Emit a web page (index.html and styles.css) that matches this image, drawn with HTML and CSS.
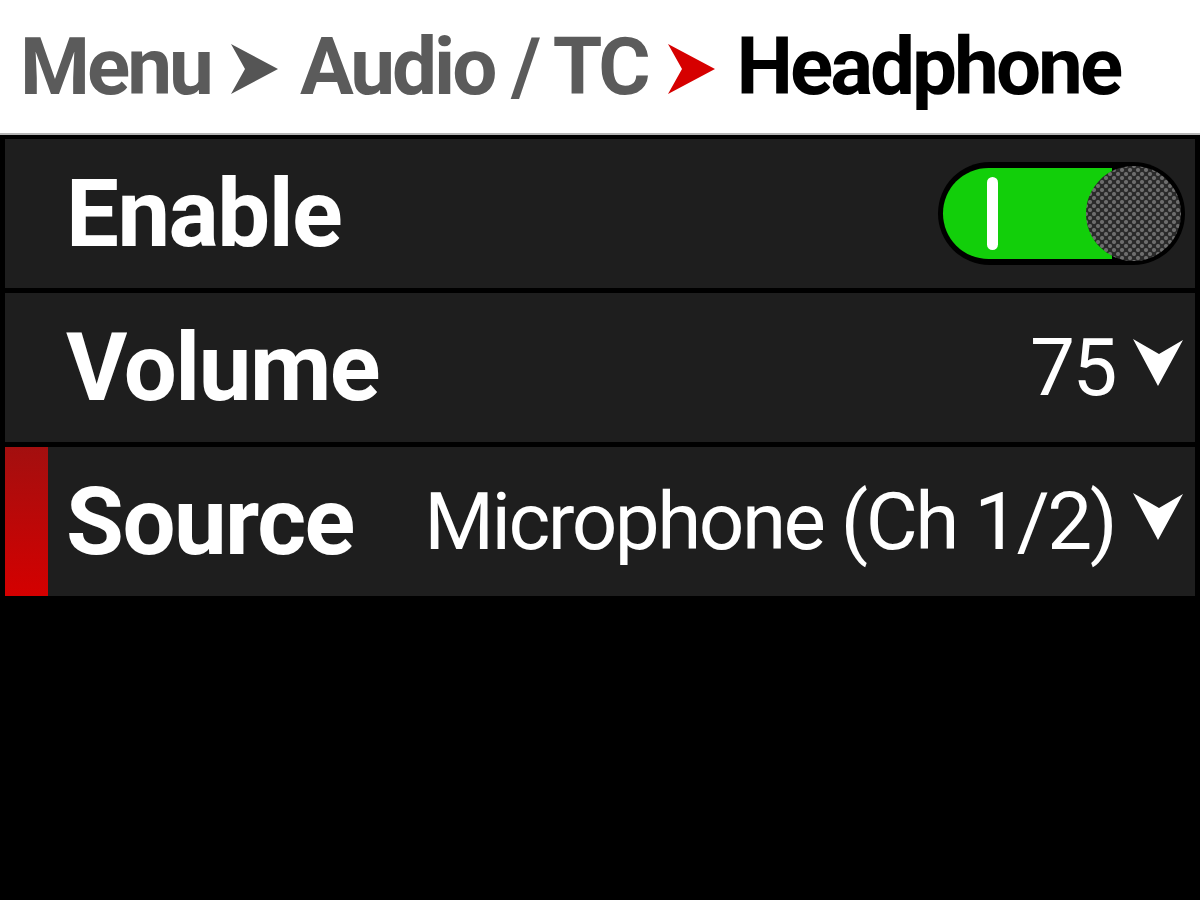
FILE: index.html
```html
<!DOCTYPE html>
<html lang="en">
<head>
    <meta charset="UTF-8">
    <title>Headphone</title>
    <link rel="stylesheet" href="styles.css">
</head>
<body>

    <div class="header">
        <span class="crumb">Menu</span>
        <svg class="sep" width="47" height="50" viewBox="0 0 47 50"><polygon points="0,0 47,25 0,50 14,25" fill="#555"/></svg>
        <span class="crumb">Audio / TC</span>
        <svg class="sep" width="47" height="50" viewBox="0 0 47 50"><polygon points="0,0 47,25 0,50 14,25" fill="#d60000"/></svg>
        <span class="crumb current">Headphone</span>
    </div>

    <div class="list">
        <div class="row">
            <span class="marker"></span>
            <span class="label">Enable</span>
            <div class="toggle">
                <div class="track"><span class="bar"></span></div>
                <div class="knob"></div>
            </div>
        </div>
        <div class="row">
            <span class="marker"></span>
            <span class="label">Volume</span>
            <span class="value">75</span>
            <svg class="drop" width="50" height="47" viewBox="0 0 50 47"><polygon points="0,0 26,15 50,1 25,47" fill="#fff"/></svg>
        </div>
        <div class="row">
            <span class="marker active"></span>
            <span class="label">Source</span>
            <span class="value">Microphone (Ch 1/2)</span>
            <svg class="drop" width="50" height="47" viewBox="0 0 50 47"><polygon points="0,0 26,15 50,1 25,47" fill="#fff"/></svg>
        </div>
    </div>

</body>
</html>
```

FILE: styles.css
```css
body {
    margin: 0;
    background-color: #000;
    font-family: Roboto, "Liberation Sans", sans-serif;
}
.header {
    height: 133px;
    background-color: #fff;
    border-bottom: 2px solid #b5b5b5;
    display: flex;
    align-items: center;
    padding-left: 20px;
}
.crumb {
    font-size: 80px;
    font-weight: 700;
    color: #5b5b5b;
    letter-spacing: -3px;
}
.crumb.current {
    color: #000;
}
.sep {
    margin: 4px 22px 0 20px;
}
.list {
    display: flex;
    flex-direction: column;
    gap: 5px;
    padding: 4px 5px;
}
.row {
    height: 149px;
    background-color: #1e1e1e;
    display: flex;
    align-items: center;
    padding-right: 12px;
}
.marker {
    width: 43px;
    align-self: stretch;
    margin-right: 18px;
}
.marker.active {
    background: linear-gradient(#a30f0f, #d40000);
}
.label {
    flex: 1;
    font-size: 94px;
    font-weight: 700;
    color: #fff;
    letter-spacing: -1.5px;
}
.value {
    font-size: 80px;
    font-weight: 400;
    color: #fff;
    letter-spacing: -2.5px;
    margin-right: 18px;
}
.drop {
    margin-bottom: 10px;
}
.toggle {
    width: 237px;
    height: 93px;
    padding: 5px;
    border-radius: 52px;
    background-color: #000;
    display: flex;
    margin-right: -2px;
}
.track {
    flex: 1;
    background-color: #12cf0a;
    border-radius: 47px 0 0 47px;
    margin: 1px 0;
    display: flex;
    align-items: center;
    padding-left: 44px;
}
.bar {
    width: 11px;
    height: 73px;
    border-radius: 6px;
    background-color: #fff;
}
.knob {
    width: 95px;
    height: 95px;
    margin: -1px -1px 0 -26px;
    border-radius: 50%;
    background-color: #2a2a2a;
    background-image: radial-gradient(circle, #6e6e6e 1.5px, transparent 2.5px), radial-gradient(circle, #6e6e6e 1.5px, transparent 2.5px);
    background-size: 8px 8px;
    background-position: 0 0, 4px 4px;
}
```
